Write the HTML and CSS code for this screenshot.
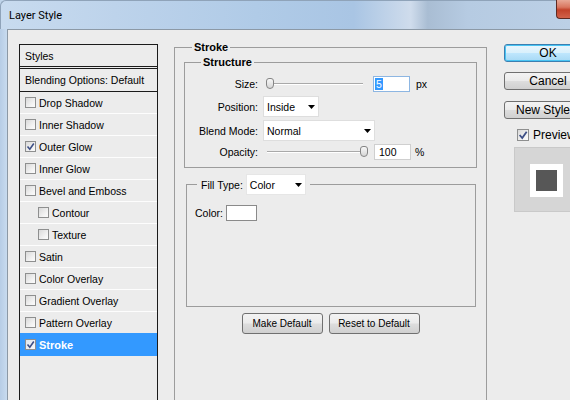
FILE: index.html
```html
<!DOCTYPE html>
<html>
<head>
<meta charset="utf-8">
<title>Layer Style</title>
<link rel="stylesheet" href="styles.css">
</head>
<body>
<div class="window">
  <div class="titlebar">
    <span class="title">Layer Style</span>
    <div class="close"></div>
  </div>
  <div class="frame">
    <div class="frame-left"></div>
    <div class="client">
      <div class="styles-panel">
        <div class="styles-head">Styles</div>
        <div class="blend-row">Blending Options: Default</div>
        <div class="style-row"><span class="cb"></span><span class="lbl">Drop Shadow</span></div>
        <div class="style-row"><span class="cb"></span><span class="lbl">Inner Shadow</span></div>
        <div class="style-row"><span class="cb"><svg viewBox="0 0 9 9" width="9" height="9"><path d="M1.5 4.5 L3.8 7.2 L7.8 1.5" fill="none" stroke="#3d4f86" stroke-width="1.6"/></svg></span><span class="lbl">Outer Glow</span></div>
        <div class="style-row"><span class="cb"></span><span class="lbl">Inner Glow</span></div>
        <div class="style-row"><span class="cb"></span><span class="lbl">Bevel and Emboss</span></div>
        <div class="style-row sub"><span class="cb"></span><span class="lbl">Contour</span></div>
        <div class="style-row sub"><span class="cb"></span><span class="lbl">Texture</span></div>
        <div class="style-row"><span class="cb"></span><span class="lbl">Satin</span></div>
        <div class="style-row"><span class="cb"></span><span class="lbl">Color Overlay</span></div>
        <div class="style-row"><span class="cb"></span><span class="lbl">Gradient Overlay</span></div>
        <div class="style-row"><span class="cb"></span><span class="lbl">Pattern Overlay</span></div>
        <div class="style-row selected"><span class="cb"><svg viewBox="0 0 9 9" width="9" height="9"><path d="M1.5 4.5 L3.8 7.2 L7.8 1.5" fill="none" stroke="#3d4f86" stroke-width="1.6"/></svg></span><span class="lbl">Stroke</span></div>
      </div>

      <fieldset class="group stroke-group">
        <legend class="legend-strong stroke-legend">Stroke</legend>
        <fieldset class="group structure-group">
          <legend class="legend-strong structure-legend">Structure</legend>
          <div class="structure-body">
            <div class="prow row-size">
              <span class="plabel">Size:</span>
              <div class="slider"><div class="track"></div><div class="thumb thumb-left"></div></div>
              <div class="num num-focus"><span class="sel">5</span></div>
              <span class="unit unit-px">px</span>
            </div>
            <div class="prow row-position">
              <span class="plabel">Position:</span>
              <div class="select sel-position"><span>Inside</span><svg class="arrow" viewBox="0 0 7 4" width="7" height="4"><polygon points="0,0 7,0 3.5,4" fill="#000"/></svg></div>
            </div>
            <div class="prow row-blend">
              <span class="plabel">Blend Mode:</span>
              <div class="select sel-blend"><span>Normal</span><svg class="arrow" viewBox="0 0 7 4" width="7" height="4"><polygon points="0,0 7,0 3.5,4" fill="#000"/></svg></div>
            </div>
            <div class="prow row-opacity">
              <span class="plabel">Opacity:</span>
              <div class="slider"><div class="track"></div><div class="thumb thumb-right"></div></div>
              <div class="num num-plain">100</div>
              <span class="unit unit-pct">%</span>
            </div>
          </div>
        </fieldset>

        <fieldset class="group fill-group">
          <legend class="fill-legend">
            <span>Fill Type:</span>
            <div class="select sel-fill"><span>Color</span><svg class="arrow" viewBox="0 0 7 4" width="7" height="4"><polygon points="0,0 7,0 3.5,4" fill="#000"/></svg></div>
          </legend>
          <div class="fill-body">
            <div class="color-row"><span>Color:</span><span class="swatch"></span></div>
          </div>
        </fieldset>

        <div class="btn-row">
          <div class="btn btn-make">Make Default</div>
          <div class="btn btn-reset">Reset to Default</div>
        </div>
      </fieldset>

      <div class="actions">
        <div class="dbtn dbtn-ok">OK</div>
        <div class="dbtn dbtn-cancel">Cancel</div>
        <div class="dbtn dbtn-new">New Style...</div>
        <div class="preview-row">
          <span class="cb cb-lg"><svg viewBox="0 0 9 9" width="10" height="10"><path d="M1.5 4.5 L3.8 7.2 L7.8 1.5" fill="none" stroke="#3d4f86" stroke-width="1.6"/></svg></span>
          <span class="preview-lbl">Preview</span>
        </div>
        <div class="preview-box">
          <div class="preview-white"><div class="preview-dark"></div></div>
        </div>
      </div>
    </div>
  </div>
</div>
</body>
</html>
```

FILE: styles.css
```css
html, body {
  margin: 0;
  padding: 0;
}
body {
  width: 570px;
  height: 400px;
  overflow: hidden;
  background: #ececec;
  font-family: "Liberation Sans", Arial, sans-serif;
  font-size: 10.5px;
  color: #000;
}
.window {
  width: 570px;
  height: 400px;
  display: flex;
  flex-direction: column;
  overflow: hidden;
  background: #bfd4ea;
}
.titlebar {
  flex: none;
  height: 29px;
  box-sizing: border-box;
  display: flex;
  align-items: center;
  padding-left: 8px;
  border-top-left-radius: 6px;
  border-top: 1px solid #8fa3b9;
  border-left: 1px solid #8fa3b9;
  background: linear-gradient(90deg, #c8dbef 0%, #bdd3eb 20%, #b0cbe7 45%, #a9c5e4 62%, #cfdcec 72%, #a9bdd3 75%, #b6cbe2 82%, #bcd0e6 100%);
}
.title {
  font-family: Roboto, "Liberation Sans", sans-serif;
  font-size: 11px;
  color: #000;
  padding-left: 0;
}
.close {
  margin-left: auto;
  align-self: flex-start;
  margin-top: -1px;
  width: 14px;
  height: 19px;
  box-sizing: border-box;
  border-left: 1px solid #5e2a22;
  border-bottom: 1px solid #5e2a22;
  border-bottom-left-radius: 4px;
  background: linear-gradient(180deg, #e8a896 0%, #d9765f 40%, #c2422a 55%, #d2624a 100%);
}
.frame {
  flex: 1;
  display: flex;
  min-height: 0;
}
.frame-left {
  flex: none;
  width: 7px;
  background: linear-gradient(90deg, #b7cde6, #c8dbef);
}
.client {
  flex: 1;
  min-width: 0;
  display: flex;
  align-items: flex-start;
  padding: 11px 0 0 11px;
  background: #ececec;
  border-left: 1px solid #8c99a6;
  border-top: 1px solid #8c99a6;
  overflow: hidden;
}

/* Styles list */
.styles-panel {
  flex: none;
  margin-top: 3px;
  width: 139px;
  height: 400px;
  box-sizing: border-box;
  border: 1px solid #1b1b1b;
  background: #ececec;
}
.styles-head {
  height: 21px;
  display: flex;
  align-items: center;
  padding-left: 5px;
  border-bottom: 1px solid #1b1b1b;
}
.blend-row {
  margin-top: 1px;
  height: 22px;
  display: flex;
  align-items: center;
  padding-left: 5px;
  border-top: 1px solid #1b1b1b;
  border-bottom: 1px solid #1b1b1b;
}
.style-row {
  height: 21px;
  display: flex;
  align-items: center;
  padding-left: 5px;
  border-bottom: 1px solid #fdfdfd;
}
.style-row.sub {
  padding-left: 18px;
}
.style-row .lbl {
  margin-left: 3px;
}
.style-row.selected {
  background: #3399ff;
  color: #fff;
  font-weight: bold;
  font-size: 11px;
  border-bottom-color: #3399ff;
  margin-top: -1px;
  border-top: 1px solid #3399ff;
}
.cb {
  flex: none;
  width: 11px;
  height: 11px;
  box-sizing: border-box;
  border: 1px solid #8e8f8f;
  background: linear-gradient(135deg, #d9d9d9 0%, #f4f4f4 70%, #fbfbfb 100%);
  display: flex;
  align-items: center;
  justify-content: center;
}
.selected .cb {
  background: linear-gradient(135deg, #dfe6ee 0%, #f6f8fa 100%);
}
.cb-lg {
  width: 12px;
  height: 12px;
}

/* Group boxes */
.group {
  margin: 0;
  padding: 0;
  border: 1px solid #9c9c9c;
  min-width: 0;
  box-sizing: border-box;
}
.legend-strong {
  font-weight: bold;
  font-size: 11px;
  line-height: 13px;
  padding: 0 2px;
}
.stroke-group {
  flex: none;
  margin-left: 16px;
  width: 313px;
  height: 420px;
  padding: 0 9px;
}
.stroke-legend {
  margin-left: 8px;
}
.structure-group {
  margin-top: 2px;
}
.structure-legend {
  margin-left: 16px;
}
.structure-body {
  padding: 7px 0 7px 0;
}
.prow {
  display: flex;
  align-items: center;
}
.plabel {
  flex: none;
  width: 73px;
  text-align: right;
}
.row-size { height: 16px; }
.row-position { height: 21px; margin-top: 4px; }
.row-blend { height: 21px; margin-top: 3px; }
.row-opacity { height: 16px; margin-top: 3px; }

.slider {
  position: relative;
  flex: none;
  width: 102px;
  height: 16px;
  margin-left: 8px;
  display: flex;
  align-items: center;
}
.track {
  margin-left: 1px;
  width: 96px;
  height: 0;
  border-top: 1px solid #a9a9a9;
  border-bottom: 1px solid #ffffff;
}
.thumb {
  position: absolute;
  top: 2px;
  width: 8px;
  height: 11px;
  box-sizing: border-box;
  border: 1px solid #858585;
  border-radius: 3px 3px 4px 4px;
  background: linear-gradient(180deg, #f7f7f7, #d6d6d6);
}
.thumb-left { left: 0; }
.thumb-right { right: 0; }

.num {
  flex: none;
  width: 37px;
  height: 16px;
  box-sizing: border-box;
  background: #fff;
  display: flex;
  align-items: center;
}
.num-focus {
  margin-left: 5px;
  border: 1px solid #8db6e2;
  padding-left: 1px;
}
.num-plain {
  margin-left: 6px;
  border: 1px solid #cfcfcf;
  padding-left: 4px;
}
.sel {
  background: #3399ff;
  color: #fff;
  padding: 0 1px;
  line-height: 12px;
}
.unit-px { margin-left: 6px; }
.unit-pct { margin-left: 4px; }

.select {
  flex: none;
  box-sizing: border-box;
  height: 21px;
  border: 1px solid #dedede;
  background: #fff;
  display: flex;
  align-items: center;
  justify-content: space-between;
  padding: 0 3px 0 3px;
}
.sel-position { margin-left: 5px; width: 56px; }
.sel-blend { margin-left: 5px; width: 112px; }
.arrow { flex: none; }

.fill-group {
  margin: 6px 1px 0 2px;
}
.fill-legend {
  display: flex;
  align-items: center;
  margin-left: 10px;
  padding: 0 4px;
  height: 21px;
}
.sel-fill {
  margin-left: 3px;
  width: 60px;
  border-color: #e6e6e6;
}
.fill-body {
  height: 111px;
  box-sizing: border-box;
  padding: 10px 8px 0 8px;
}
.color-row {
  display: flex;
  align-items: center;
  height: 16px;
}
.swatch {
  margin-left: 3px;
  width: 31px;
  height: 16px;
  box-sizing: border-box;
  border: 1px solid #8a8a8a;
  background: #fff;
}

.btn-row {
  margin-top: 6px;
  display: flex;
  justify-content: center;
  gap: 6px;
}
.btn {
  height: 21px;
  box-sizing: border-box;
  border: 1px solid #707070;
  border-radius: 3px;
  background: linear-gradient(180deg, #f3f3f3 0%, #ebebeb 48%, #dddddd 52%, #d0d0d0 100%);
  display: flex;
  align-items: center;
  justify-content: center;
  font-size: 10px;
}
.btn-make { width: 81px; }
.btn-reset { width: 91px; }

/* Right column */
.actions {
  flex: none;
  margin-left: 17px;
  margin-top: 3px;
  width: 88px;
  font-size: 12px;
}
.dbtn {
  height: 18px;
  box-sizing: border-box;
  border: 1px solid #707070;
  border-radius: 3px;
  background: linear-gradient(180deg, #f3f3f3 0%, #ebebeb 48%, #dddddd 52%, #d0d0d0 100%);
  display: flex;
  align-items: center;
  justify-content: center;
}
.dbtn-ok {
  border-color: #3c7fb1;
  background: linear-gradient(180deg, #eaf6fd 0%, #d9f0fc 48%, #bee6fd 52%, #a7d9f5 100%);
  box-shadow: inset 0 0 0 1px #48c4f3;
}
.dbtn-cancel { margin-top: 10px; }
.dbtn-new { margin-top: 11px; }
.preview-row {
  margin-top: 9px;
  height: 13px;
  display: flex;
  align-items: center;
}
.preview-row .cb {
  margin-left: 13px;
}
.preview-lbl {
  margin-left: 4px;
}
.preview-box {
  margin-top: 6px;
  margin-left: 10px;
  width: 80px;
  height: 65px;
  box-sizing: border-box;
  border: 1px solid #c9c9c9;
  background: #d6d6d6;
  padding: 16px 0 0 15px;
}
.preview-white {
  width: 33px;
  height: 33px;
  box-sizing: border-box;
  padding: 6px;
  background: #fff;
}
.preview-dark {
  width: 21px;
  height: 21px;
  background: #575757;
}
```
